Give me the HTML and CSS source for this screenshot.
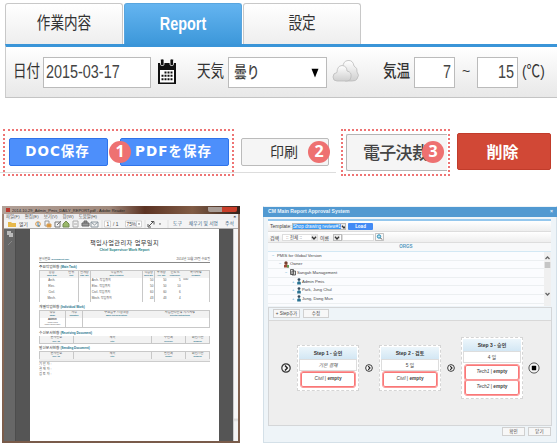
FILE: index.html
```html
<!DOCTYPE html>
<html lang="ja">
<head>
<meta charset="utf-8">
<title>Report</title>
<link rel="stylesheet" href="styles.css">
</head>
<body>
<svg width="0" height="0" class="defs">
  <defs>
    <symbol id="chev" viewBox="0 0 10 10"><circle cx="5" cy="5" r="4.2" fill="#f6f6f6" stroke="#333" stroke-width="1.2"/><path d="M4 2.6 6.3 5 4 7.4" fill="none" stroke="#222" stroke-width="1.4"/></symbol>
    <symbol id="person" viewBox="0 0 4 7"><circle cx="2" cy="1.6" r="1.4" fill="#354b5c"/><path d="M.2 6.5V4.2Q2 2.4 3.8 4.2V6.5Z" fill="#297292"/></symbol>
    <symbol id="down" viewBox="0 0 6 6"><path d="M1 1.8 3 4 5 1.8" fill="none" stroke="#333" stroke-width="1.3"/></symbol>
  </defs>
</svg>
<main class="page">
  <nav class="tabs">
    <div class="tab"><span class="nar">作業内容</span></div>
    <div class="tab active"><span class="nar">Report</span></div>
    <div class="tab"><span class="nar">設定</span></div>
  </nav>
  <section class="filters">
    <label class="lb date-lb"><span class="nar">日付</span></label>
    <div class="inp date"><span class="nar">2015-03-17</span></div>
    <svg class="cal" viewBox="0 0 20 26"><path d="M1 4h18v21H1z" fill="#111"/><path d="M3 11h14v12.500H3z" fill="#fff"/><rect x="3.500" y="0" width="3.500" height="6.500" rx="1.200" fill="#111" stroke="#fff" stroke-width=".8"/><rect x="13" y="0" width="3.500" height="6.500" rx="1.200" fill="#111" stroke="#fff" stroke-width=".8"/><g fill="#111"><path d="M7.500 12.500h2v2h-2zm3 0h2v2h-2zm3 0h2v2h-2zM4.500 15.800h2v2h-2zm3 0h2v2h-2zm3 0h2v2h-2zm3 0h2v2h-2zM4.500 19.200h2v2h-2zm3 0h2v2h-2zm3 0h2v2h-2zm3 0h2v2h-2z"/></g></svg>
    <label class="lb sky-lb"><span class="nar">天気</span></label>
    <div class="inp sky"><span class="nar">曇り</span><svg width="8" height="10" viewBox="0 0 8 10"><path d="M.5 .8h7L4 9.600z" fill="#000"/></svg></div>
    <svg class="cloud" viewBox="0 0 28 24"><defs><linearGradient id="cg" x2="0" y2="1"><stop offset="0" stop-color="#fff"/><stop offset="1" stop-color="#cfcfcf"/></linearGradient></defs><path d="M12 20Q9 18 10 14Q8 10 11 8Q11 2 16 1.500Q21 1 22 7Q26 9 25 13Q28 16 25 20Q24 22 20 22H13Z" fill="url(#cg)" stroke="#bbb" stroke-width=".8"/><path d="M5 22Q1 22 1 18Q1 14 5 13.500Q5 7 10 6.500Q15 7 15 12Q20 13 19 18Q19 22 15 22Z" fill="url(#cg)" stroke="#bbb" stroke-width=".8"/></svg>
    <label class="lb temp-lb"><span class="nar">気温</span></label>
    <div class="inp temp"><span class="nar">7</span></div>
    <span class="tilde">~</span>
    <div class="inp temp"><span class="nar">15</span></div>
    <span class="unit"><span class="nar">(℃)</span></span>
  </section>

  <section class="actions">
    <div class="left">
      <div class="dotted save">
        <div class="btn blue doc">DOC保存</div>
        <div class="btn blue pdf">PDFを保存</div>
        <b class="badge b1">1</b>
      </div>
      <div class="btn gray">印刷<b class="badge b2">2</b></div>
    </div>
    <div class="dotted sign"><div class="btn big">電子決裁</div><b class="badge b3">3</b></div>
    <div class="btn red"><span>削除</span></div>
  </section>

  <section class="shots">
    <article class="reader">
      <header class="r-title"><i></i><span>2014-10-29_Admin_Pmis_DAILY_REPORT.pdf - Adobe Reader</span><em></em></header>
      <div class="r-menu"><span>파일(F)</span><span>편집(E)</span><span>보기(V)</span><span>창(W)</span><span>도움말(H)</span><b>×</b></div>
      <div class="r-tools">
        <svg width="170" height="8" viewBox="0 0 170 8"><path d="M4 2h3l1 1h4v4H4z" fill="#e7b94c"/><g fill="none" stroke-width="1"><circle cx="34" cy="4" r="2.300" stroke="#dd9640"/><path d="M34 2v4h2" stroke="#3f82b5"/><path d="M41 1h4v5h-4z" stroke="#999"/><path d="M43 4h4v3h-4z" fill="#d99638" stroke="#d9a15b"/><path d="M51 2h5v5h-5zM53 5l4-4" stroke="#777"/><path d="M59 4l3-3 3 3v3h-6z" fill="#9ab86a" stroke="#728a50"/><path d="M69 1h5v6h-5zM70 4h3" stroke="#aaa"/><path d="M78 3h7v3h-7zM80 3V1h3v2" fill="#999" stroke="#666"/><path d="M87 2h7v5h-7zM87 2l3.500 3 3.500-3" stroke="#8d98a0"/><path d="M98 0v8M141 0v8M164 0v8" stroke="#ccc" stroke-width=".5"/><path d="M100.500 1h6v6h-6zM121.500 1h16v6h-16zM132.500 1v6" fill="#fff" stroke="#bbb" stroke-width=".6"/><path d="M145 6l4-4M147 1.500h3v3M144 4v3h3" stroke="#555"/></g><path d="M134 3.500h2l-1 1.500zM155 3.500h2l-1 1.500z" fill="#444"/><g class="tt"><text x="15" y="5.700">열기</text><text x="102.500" y="5.500">1</text><text x="109" y="5.500">/ 1</text><text x="122.500" y="5.500">75%</text></g></svg>
        <span>도구</span><span>채우기 및 서명</span><span>주석</span>
      </div>
      <div class="r-body">
        <aside><svg width="6" height="16" viewBox="0 0 6 16"><path d="M0 1h4v4H0zM2 3h4v4H2z" fill="#bbb"/><path d="M1 15l4-4" stroke="#888"/></svg></aside>
        <div class="paper">
          <h1>책임사업관리자 업무일지</h1>
          <h2>Chief Supervisor Work Report</h2>
          <div class="meta"><span>문서번호 <u>(Document No)</u></span><span>2014년 10월 29일 수요일</span></div>
          <h3>주요작업현황 <u>(Main Task)</u></h3>
          <div class="tbl t1">
            <p>공종<u>Work Item</u></p><p>단위<u>Unit</u></p><p>설계량<u>Dgn. Qty</u></p><p>작업위치<u>Work Location</u></p><p>작업량<u>Work Qty</u></p><p>누계량<u>Acc. Qty</u></p><p>진도%<u>Progress%</u></p><p>특이사항<u>Remarks</u></p>
            <s>Arch.</s><s></s><s></s><s class="l">Arch. 작업위치</s><s class="r">50</s><s class="r">50</s><s class="r">5</s><s class="l up">000</s>
            <s>Elec.</s><s></s><s></s><s class="l">Elec. 작업위치</s><s class="r">50</s><s class="r">50</s><s class="r">10</s><s></s>
            <s>Civil.</s><s></s><s></s><s class="l">Civil. 작업위치</s><s class="r">60</s><s class="r">60</s><s class="r">6</s><s></s>
            <s>Mech.</s><s></s><s></s><s class="l">Mech. 작업위치</s><s class="r">43</s><s class="r">43</s><s class="r">4</s><s></s>
          </div>
          <h3 class="h-b">개별작업현황 <u>(Individual Work)</u></h3>
          <div class="tbl t2">
            <p>성명<u>Name</u></p><p>서명<u>Signature</u></p><p>주요업무 시행내용<u>Major Job Description</u></p><p>사업관리단장 지시사항<u>Director Instructions</u></p>
            <s class="who"><b>Admin</b>Admin Pmis<br>(Chief Supervisor)</s><s></s><s></s><s></s>
          </div>
          <h3 class="h-c">수신문서현황 <u>(Receiving Document)</u></h3>
          <div class="tbl t3"><p>문서번호<u>Doc. No</u></p><p>제목<u>Title</u></p><p>수신처<u>Receiver</u></p><p>회신기한<u>Deadline</u></p></div>
          <h3 class="h-d">발신문서현황 <u>(Sending Document)</u></h3>
          <div class="tbl t3"><p>문서번호<u>Doc. No</u></p><p>제목<u>Title</u></p><p>발신처<u>Sender</u></p><p>회신기한<u>Deadline</u></p></div>
          <div class="strip"></div>
          <div class="sig">기 안 자 :<br>결 재 자 :<br>검 토 자 :</div>
        </div>
        <div class="r-scroll"></div>
      </div>
    </article>

    <article class="approval">
      <header>CM Main Report Approval System<span>×</span></header>
      <div class="a-in">
        <div class="bar tpl"><span class="tx w22">Template:</span><span class="sel hi">Shop drawing review#1<svg width="6" height="6"><use href="#down"/></svg></span><span class="load">Load</span></div>
        <div class="bar"><span class="tx w11">검색</span><span class="sel s1">:: 전체 ::<svg width="6" height="6"><use href="#down"/></svg></span><span class="tx nm">이름</span><span class="sel s2"><svg width="6" height="6"><use href="#down"/></svg></span><span class="sel s3"></span><svg class="mag" width="9" height="8" viewBox="0 0 9 8"><path d="M.5.5h8v7h-8z" fill="#f8f8f8" stroke="#aaa" stroke-width=".7"/><circle cx="4" cy="3.500" r="1.700" fill="#bfe6f5" stroke="#2a8fb8"/><path d="M5.300 4.800 7 6.500" stroke="#444"/></svg></div>
        <div class="orgs"><span>ORGS</span></div>
        <div class="tree">
          <div class="rows">
            <div class="row"><i>−</i>PMIS for Global Version</div>
            <div class="row d1"><i>−</i><svg width="5" height="7" viewBox="0 0 5 7"><circle cx="2" cy="2" r="1.700" fill="#713f2d"/><path d="M0 6.500V4l3-1 2 3.500z" fill="#9c4a35"/><path d="M3 4h2v2.500H3z" fill="#61a05b"/></svg>Owner</div>
            <div class="row d2"><i>−</i><svg width="6" height="7" viewBox="0 0 6 7"><path d="M.5.5h3v5h-3zM2 2h3.500v4H2z" fill="#ddd" stroke="#444" stroke-width=".8"/></svg>Sangah Management</div>
            <div class="row d3"><i>+</i><svg width="4" height="7"><use href="#person"/></svg>Admin Pmis</div>
            <div class="row d3"><i>+</i><svg width="4" height="7"><use href="#person"/></svg>Park, Jung Chul</div>
            <div class="row d3"><i>+</i><svg width="4" height="7"><use href="#person"/></svg>Jung, Dong Mun</div>
          </div>
          <div class="sb"><svg width="7" height="52" viewBox="0 0 7 52"><path d="M1.500 7 3.500 5 5.500 7M1.500 41l2 2 2-2" fill="none" stroke="#666" stroke-width="1.300"/><path d="M.7 10h5.600v6H.7z" fill="#c5c5c5"/></svg></div>
        </div>
        <div class="panel">
          <div class="p-btns"><span class="mini m1">+ Step추가</span><span class="mini m2">수정</span></div>
          <div class="flow">
            <svg width="10" height="10"><use href="#chev"/></svg>
            <div class="card"><h4>Step 1 - 승인</h4><div class="who2"><em>기본 결재</em></div><div class="red-b"><em>Civil</em> | <b>empty</b></div></div>
            <svg width="8" height="8"><use href="#chev"/></svg>
            <div class="card"><h4>Step 2 - 검토</h4><div class="who2">5 일</div><div class="red-b"><em>Civil</em> | <b>empty</b></div></div>
            <svg width="8" height="8"><use href="#chev"/></svg>
            <div class="card tall"><h4>Step 3 - 승인</h4><div class="who2">4 일</div><div class="red-b"><em>Tech1</em> | <b>empty</b></div><div class="red-b"><em>Tech2</em> | <b>empty</b></div></div>
            <svg width="12" height="12" viewBox="0 0 12 12"><circle cx="6" cy="6" r="5.100" fill="#f6f6f6" stroke="#444" stroke-width=".9"/><rect x="3.800" y="3.800" width="4.400" height="4.400" rx=".6" fill="#000"/></svg>
          </div>
        </div>
        <footer><span class="mini f1">확인</span><span class="mini f1">닫기</span></footer>
      </div>
    </article>
  </section>
</main>
</body>
</html>
```
FILE: styles.css
```css
* { box-sizing: border-box; }
body { margin: 0; background: #fff; font-family: "Liberation Sans", "Noto Sans CJK JP", sans-serif; color: #444; }
.defs { display: none; }
.page { width: 557px; height: 443px; overflow: hidden; display: flex; flex-direction: column; }
.page svg, .page span { flex: none; }
.nar { display: inline-block; transform: scaleX(.8); white-space: nowrap; }

/* tabs */
.tabs { display: flex; gap: 1px; padding: 3px 0 0 5px; height: 44px; flex: none; }
.tab { width: 118px; height: 41px; border: 1px solid #c8c8c8; border-bottom: 0; border-radius: 3px 3px 0 0; background: linear-gradient(#fff, #eee); display: flex; justify-content: center; align-items: center; font-size: 17px; color: #333; line-height: 40px; }
.tab.active { background: linear-gradient(#64b4f0, #3d98da); border-color: #58a5de; color: #fff; font-weight: bold; font-size: 18px; }

/* filter bar */
.filters { flex: none; margin-left: 5px; height: 54px; border-top: 3px solid #3a95d8; border-left: 1px solid #ccc; border-bottom: 1px solid #c4c4c4; background: linear-gradient(#fff, #e8e8e8); display: flex; align-items: flex-start; padding: 10px 0 0 7px; font-size: 17px; line-height: 29px; color: #333; }
.lb .nar, .date .nar, .sky .nar, .unit .nar { transform-origin: left; }
.lb, .unit { display: block; flex: none; white-space: nowrap; }
.date-lb { width: 30px; }
.inp { height: 31px; border: 1px solid #bbb; background: #fff; flex: none; font-size: 18px; line-height: 29px; color: #444; }
.date { width: 108px; padding-left: 2px; }
.cal { width: 20px; height: 26px; margin: 2px 0 0 6px; }
.sky-lb { width: 31px; margin-left: 20px; }
.sky { width: 99px; padding: 0 7px 0 5px; display: flex; justify-content: space-between; align-items: center; font-size: 16px; font-weight: 500; }
.cloud { width: 28px; height: 24px; margin: 2px 0 0 5px; }
.temp-lb { width: 31px; margin-left: 23px; font-weight: 500; }
.temp { width: 41px; text-align: right; padding-right: 3px; }
.temp .nar { transform-origin: right; }
.tilde { width: 22px; text-align: center; font-size: 14px; }
.unit { margin-left: 4px; }

/* action buttons */
.actions { flex: none; height: 108px; padding: 31px 0 0; display: flex; align-items: flex-start; }
.left { width: 336px; height: 44px; padding-left: 3px; border-bottom: 1px solid #ddd; display: flex; }
.dotted { position: relative; border: 2px dotted #ee7474; height: 47px; flex: none; }
.save { width: 231px; padding: 7px 0 0 4px; display: flex; gap: 12px; }
.btn { height: 28px; border-radius: 2px; display: flex; justify-content: center; align-items: center; white-space: nowrap; font-size: 14px; flex: none; position: relative; }
.blue { background: #4d8ffb; border: 1px solid #2f73ea; color: #fff; font: bold 13.5px/24px "DejaVu Sans", "Noto Sans CJK JP", sans-serif; letter-spacing: 1px; padding-bottom: 2px; }
.doc { width: 99px; padding-right: 2px; }
.pdf { width: 109px; padding-right: 2px; }
.gray { width: 88px; margin: 9px 0 0 7px; border: 1px solid #bbb; background: #f5f5f5; color: #333; padding: 0 2px 2px 0; }
.sign { width: 109px; margin-left: 5px; padding: 3px 0 0 3px; }
.big { width: 101px; height: 37px; border: 1px solid #b5b5b5; border-right: 0; background: #f5f5f5; font-size: 17px; justify-content: flex-start; padding: 0 0 2px 16px; border-radius: 2px 0 0 2px; font-weight: 500; letter-spacing: -.7px; }
.red { width: 94px; height: 37px; margin: 4px 0 0 7px; background: #d14836; border: 1px solid #c13c2b; color: #fff; font-size: 16px; font-weight: bold; padding: 0 3px 2px 0; }
.badge { position: absolute; width: 22px; height: 22px; border-radius: 50%; background: #ee7171; color: #fff; font: bold 16px/21px "Open Sans", sans-serif; letter-spacing: 0; text-align: center; }
.b1 { left: 104px; top: 10px; }
.b2 { left: 66px; top: 2px; }
.b3 { left: 79px; top: 10px; }

/* document viewer */
.shots { display: flex; gap: 23px; padding-left: 2px; height: 237px; flex: none; font-family: "Liberation Sans", "Noto Sans CJK KR", sans-serif; }
.reader { width: 238px; height: 237px; padding: 0 2px 2px; background: linear-gradient(#a08577, #8a6a58 50%, #795b4a); color: #555; overflow: hidden; }
.r-title { height: 8px; margin: 0 -2px; padding-left: 4px; display: flex; align-items: center; font-size: 4px; color: #222; background: linear-gradient(90deg, #b2a198, #a18a7d 45%, #5b3223 60%, #805b45 80%, #35221b); white-space: nowrap; }
.r-title i { width: 4px; height: 4px; background: #b93a30; margin-right: 2px; }
.r-title em { margin: 0 3px 2px auto; width: 29px; height: 5px; background: linear-gradient(90deg, #a99d97 48%, #c93e2a 50%); border-radius: 0 0 2px 2px; }
.r-menu { height: 6px; background: #ededf0; display: flex; gap: 5px; font-size: 4.4px; line-height: 6px; padding: 0 2px; }
.r-menu b { margin-left: auto; color: #222; }
.r-tools { height: 9px; background: #f4f4f4; display: flex; align-items: center; font-size: 4.2px; line-height: 8px; gap: 7px; color: #3d6484; white-space: nowrap; border-bottom: 1px solid #aaa; }
.r-tools span { font-size: 4.8px; }
.r-tools svg { margin-right: -8px; }
.tt { font-size: 4.8px; fill: #444; }
.r-body { height: 212px; display: flex; background: #555; }
.r-body aside { width: 12px; background: #676767; border-right: 1px solid #4d4d4d; padding: 0 3px; flex: none; }
.r-body aside svg { display: block; margin-top: 1px; }
.paper { width: 189px; margin: 0 14px; padding: 9px 9px 0; background: #fff; flex: none; font-size: 3.4px; color: #555; }
.r-scroll { width: 5px; background: linear-gradient(#f6f6f6 0 89%, #d8d8d8 90%, #f3f3f3 91%); border-left: 1px solid #ccc; flex: none; }
.paper h1 { margin: 0; font-size: 6.2px; line-height: 10px; font-weight: 400; text-align: center; color: #333; letter-spacing: .4px; height: 10px; white-space: nowrap; }
.paper h2 { margin: 0; font-size: 3.5px; line-height: 5px; text-align: center; color: #26827f; height: 9.5px; white-space: nowrap; }
.paper u { text-decoration: none; color: #1c7189; font-weight: bold; font-size: 2.5px; }
.meta { height: 5.5px; margin-bottom: 3px; display: flex; justify-content: space-between; font-size: 3.1px; line-height: 3px; border-bottom: 1px solid #888; width: 171px; }
.paper h3 { margin: 0; height: 4px; font-size: 3.7px; line-height: 3px; font-weight: 400; color: #333; white-space: nowrap; }
.paper h3 u { font-size: 3px; }
.tbl { display: grid; width: 171px; background: #c8c8c8; gap: .6px; padding: .6px; }
.tbl > * { margin: 0; background: #fff; text-decoration: none; font-size: 3px; line-height: 4.500px; text-align: center; white-space: nowrap; overflow: hidden; min-width: 0; }
.tbl p { background: #f2f2f2; line-height: 3.3px; font-size: 3.2px; padding-top: .4px; color: #555; }
.tbl p u { display: block; line-height: 3px; font-size: 2px; }
.tbl .l { text-align: left; padding-left: 1px; }
.tbl .r { text-align: right; padding-right: 1px; }
.tbl .up { line-height: 3px; }
.t1 { grid-template-columns: 25fr 14fr 12fr 53fr 12fr 13fr 14fr 28fr; grid-template-rows: 7px repeat(4, 5.400px); height: 32px; }
.t2 { grid-template-columns: 26fr 17fr 68fr 60fr; grid-template-rows: 7px 8.500px; height: 17.5px; }
.t3 { grid-template-columns: 34fr 79fr 34fr 24fr; grid-template-rows: 7px; height: 8.2px; }
.paper .h-b { margin-top: 4px; }
.paper .h-c { margin-top: 4px; }
.paper .h-d { margin-top: 3.5px; }
.tbl .who { font-size: 2px; line-height: 2.500px; }
.who b { display: block; font-size: 2.800px; }
.strip { height: 3px; background: #eee; border-bottom: 1px solid #ccc; }
.sig { font-size: 3.2px; line-height: 5px; }

/* approval window */
.approval { width: 294px; height: 237px; padding-top: 1px; border-left: 1px solid #d4e0e8; border-right: 1px solid #d4e0e8; border-bottom: 1px solid #d4e0e8; background: #eef4f8; font-size: 4.5px; color: #444; flex: none; }
.approval header { height: 10px; margin: 0 -1px; padding: 0 4px 0 5px; background: #5199d1; color: #e9f4fc; font: bold 5.1px/9px "Liberation Sans", sans-serif; display: flex; justify-content: space-between; }
.a-in { padding: 2px 5px 0 4px; }
.bar { height: 11px; border-bottom: 1px solid #ddd; background: linear-gradient(#fff, #eee); display: flex; align-items: center; padding-left: 2px; white-space: nowrap; }
.tpl { height: 13px; border-top: 2px solid #94c7ed; }
.tx { font-size: 5px; }
.w22 { width: 22px; }
.w11 { width: 12px; }
.sel { height: 7px; border: .5px solid #bbb; background: #fff; line-height: 6px; display: flex; justify-content: space-between; font-size: 4.6px; overflow: hidden; }
.sel svg { background: #e8e8e8; }
.hi { width: 54px; background: #3998f5; color: #fff; }
.load { width: 25px; height: 7px; margin-left: 2px; background: #428af5; color: #fff; font-weight: bold; text-align: center; line-height: 7px; border-radius: 1px; }
.s1 { width: 36px; padding-left: 3px; border-color: #ddd; }
.nm { margin: 0 4px 0 2px; }
.s2 { width: 9px; }
.s3 { width: 32px; border-color: #ddd; }
.mag { margin-left: 1px; }
.orgs { height: 9px; background: #f7f8f9; border-bottom: 1px solid #d3e8f4; font-weight: bold; color: #5499be; line-height: 8px; padding-right: 7px; text-align: center; font-size: 4.5px; }
.tree { height: 54px; display: flex; overflow: hidden; background: #fbfcfe; }
.rows { flex: 1; }
.row { height: 8.600px; border-bottom: 1px solid #eceff1; padding-left: 4px; display: flex; align-items: center; font-size: 4.200px; line-height: 8px; white-space: nowrap; }
.row i { width: 5px; font-style: normal; color: #4c9ac5; flex: none; }
.row svg { margin-right: 1px; }
.d1 { padding-left: 11px; }
.d2 { padding-left: 17px; }
.d3 { padding-left: 24px; }
.sb { width: 7px; background: #f0f0f0; }
.panel { margin: 1px -1px 0 0; height: 119px; border: 1px solid #d4d6d8; background: #eef4f8; }
.p-btns { height: 12px; padding: 1px 0 0 4px; display: flex; gap: 3px; }
.mini { height: 9px; border: .6px solid #d0d0d0; background: #f7f7f7; font-size: 4.500px; line-height: 8px; text-align: center; white-space: nowrap; }
.m1 { width: 27px; }
.m2 { width: 26px; }
.flow { height: 105px; background: #eee; border-top: 1px solid #d8d8d8; display: flex; align-items: center; padding: 0 0 10px 12px; }
.card { width: 62px; height: 46px; padding: 1px; margin: 0 6px; border: 1px dashed #d5d5d5; background: #fff; flex: none; }
.card.tall { height: 62px; margin-right: 5px; }
.card h4 { margin: 0; height: 12px; background: linear-gradient(#edf6fb, #d3e7f4); font-size: 5px; line-height: 12px; text-align: center; color: #333; }
.who2 { height: 12px; border: .5px solid #ddd; line-height: 11px; text-align: center; font-size: 4.800px; }
.red-b { width: 54px; height: 15px; margin: 1px auto 0; border: 1.500px solid #fa7777; outline: .5px solid #fa9a9a; border-radius: 2px; line-height: 12px; text-align: center; font-size: 4.800px; }
.tall .red-b { margin-top: 0; }
.tall .who2 { margin-bottom: 2px; }
.approval footer { display: flex; justify-content: flex-end; gap: 3px; padding-top: 1px; }
.f1 { width: 23px; }
```
